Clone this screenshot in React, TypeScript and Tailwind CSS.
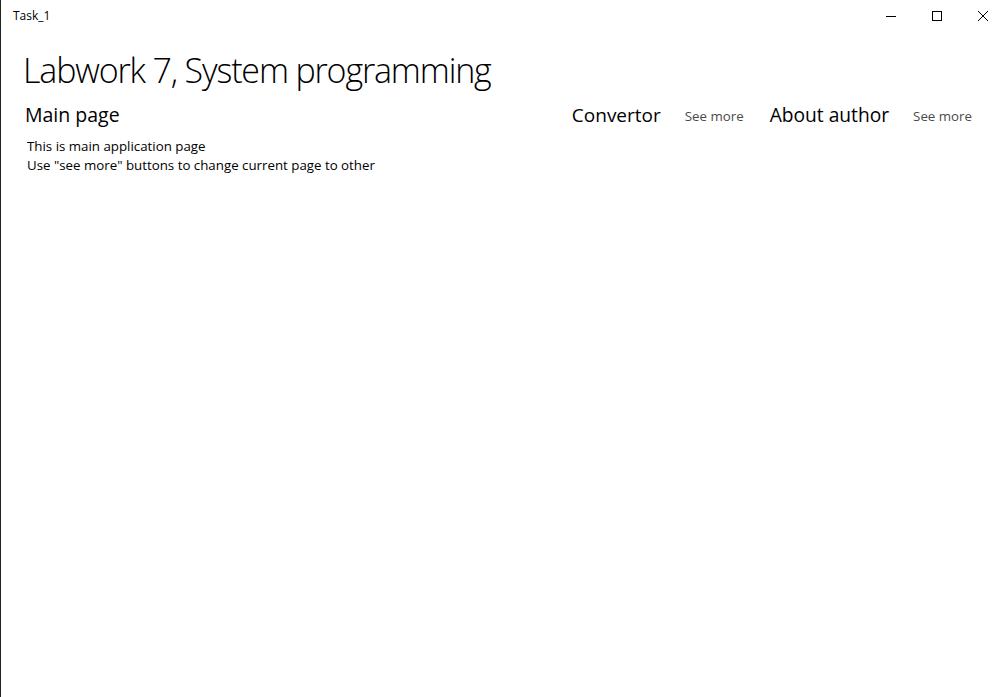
import React from "react";

export default function App() {
  const font = { fontFamily: '"Open Sans", "Noto Sans", sans-serif' };
  return (
    <div className="w-[1006px] h-[697px] bg-white flex overflow-hidden" style={font}>
      <div className="w-px h-full bg-[#1f2329]" />
      <div className="flex-1 flex flex-col">
        <div className="h-8 flex items-center">
          <div className="pl-3 text-[12px] text-black">Task_1</div>
          <div className="ml-auto flex h-8">
            <div className="w-[46px] h-8 flex items-center justify-center">
              <svg width="10" height="10" viewBox="0 0 10 10"><path d="M0 5.5h10" stroke="#000" strokeWidth="1" /></svg>
            </div>
            <div className="w-[46px] h-8 flex items-center justify-center">
              <svg width="10" height="10" viewBox="0 0 10 10"><rect x="0.5" y="0.5" width="9" height="9" fill="none" stroke="#000" strokeWidth="1" /></svg>
            </div>
            <div className="w-[46px] h-8 flex items-center justify-center">
              <svg width="10" height="10" viewBox="0 0 10 10"><path d="M0 0L10 10M10 0L0 10" stroke="#000" strokeWidth="1" /></svg>
            </div>
          </div>
        </div>
        <div className="pl-[22px] pr-[34px]">
          <div className="text-[34px] font-light leading-[48px] tracking-[-1.15px] mt-[14px] text-black">Labwork 7, System programming</div>
          <div className="flex items-baseline mt-[7px]">
            <div className="text-[19.5px] leading-[28px] text-black ml-[2px]">Main page</div>
            <div className="ml-auto flex items-baseline">
              <div className="text-[19px] leading-[28px] text-black">Convertor</div>
              <div className="text-[13.3px] text-[#4a4a4a] ml-[24px] relative -top-px">See more</div>
              <div className="text-[19.2px] leading-[28px] text-black ml-[26px]">About author</div>
              <div className="text-[13.3px] text-[#4a4a4a] ml-[24px] relative -top-px">See more</div>
            </div>
          </div>
          <div className="ml-[4px] mt-[8px] text-[13.3px] leading-[19px] text-black">
            <div>This is main application page</div>
            <div>Use "see more" buttons to change current page to other</div>
          </div>
        </div>
      </div>
    </div>
  );
}
